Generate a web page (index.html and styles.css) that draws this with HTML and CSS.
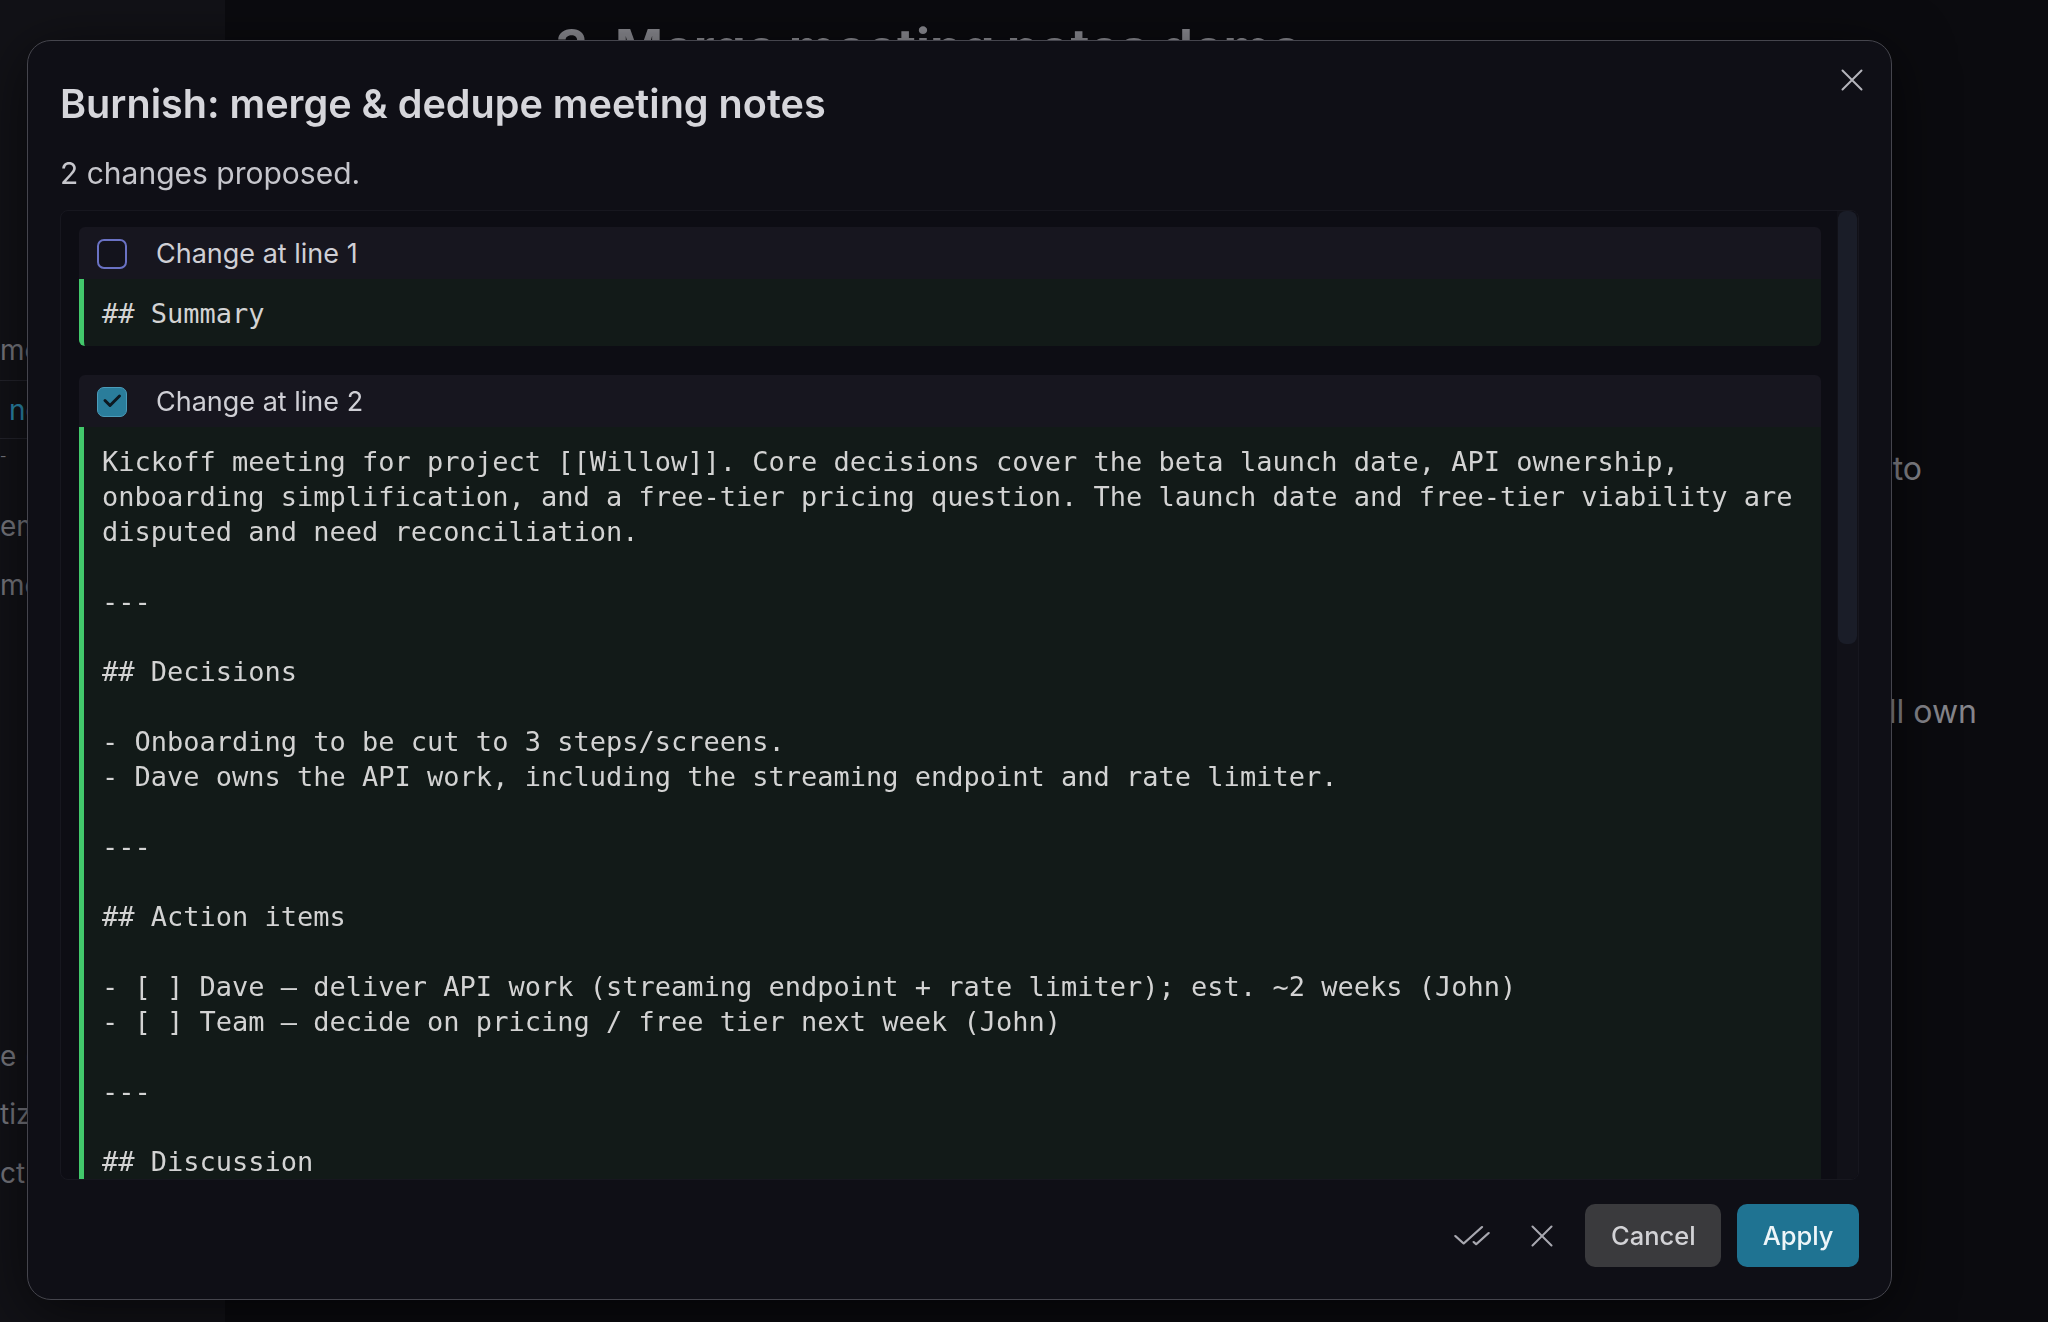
FILE: index.html
```html
<!DOCTYPE html>
<html lang="en">
<head>
<meta charset="utf-8">
<title>Burnish: merge &amp; dedupe meeting notes</title>
<link rel="stylesheet" href="styles.css">
</head>
<body>
<div class="page">
  <aside class="sidebar">
    <div class="side-item">meeting notes</div>
    <div class="side-item active">notes demo</div>
    <div class="side-item dim">-</div>
    <div class="side-item">emails</div>
    <div class="side-item">meetings</div>
    <div class="side-item nested">Kickoff</div>
    <div class="side-item nested">Standup</div>
    <div class="side-item nested">Retro</div>
    <div class="side-item nested">Planning</div>
    <div class="side-item nested">Review</div>
    <div class="side-item nested">Sync</div>
    <div class="side-item nested">Notes</div>
    <div class="side-item">e (draft)</div>
    <div class="side-item">tize</div>
    <div class="side-item">ct</div>
  </aside>
  <main class="main">
    <h1 class="doc-title">3. Merge meeting notes demo</h1>
    <p class="doc-line l1">the team agreed to</p>
    <p class="doc-line l2">Dave will own</p>
  </main>
</div>

<div class="modal" role="dialog" aria-labelledby="modal-title">
  <button class="close-btn" aria-label="Close">
    <svg width="22" height="22" viewBox="0 0 22 22" fill="none" stroke="currentColor" stroke-width="2" stroke-linecap="round"><path d="M1.5 1.5 20.5 20.5M20.5 1.5 1.5 20.5"/></svg>
  </button>
  <h2 class="modal-title" id="modal-title">Burnish: merge &amp; dedupe meeting notes</h2>
  <p class="modal-sub">2 changes proposed.</p>

  <div class="changes">
    <div class="changes-list">
      <section class="change">
        <div class="change-head">
          <span class="cb"></span>
          <span class="change-label">Change at line 1</span>
        </div>
        <pre class="diff">## Summary</pre>
      </section>

      <section class="change">
        <div class="change-head">
          <span class="cb checked">
            <svg width="30" height="30" viewBox="0 0 30 30" fill="none" stroke="currentColor" stroke-width="3" stroke-linecap="round" stroke-linejoin="round"><path d="M8 14.5 13 19.5 22.5 10"/></svg>
          </span>
          <span class="change-label">Change at line 2</span>
        </div>
        <pre class="diff">Kickoff meeting for project [[Willow]]. Core decisions cover the beta launch date, API ownership,
onboarding simplification, and a free-tier pricing question. The launch date and free-tier viability are
disputed and need reconciliation.

---

## Decisions

- Onboarding to be cut to 3 steps/screens.
- Dave owns the API work, including the streaming endpoint and rate limiter.

---

## Action items

- [ ] Dave — deliver API work (streaming endpoint + rate limiter); est. ~2 weeks (John)
- [ ] Team — decide on pricing / free tier next week (John)

---

## Discussion

- Beta launch date is disputed between the two sets of notes.
- Free-tier viability still needs numbers before a decision.</pre>
      </section>
    </div>
    <div class="scrollbar"><div class="thumb"></div></div>
  </div>

  <footer class="modal-foot">
    <button class="icon-btn" aria-label="Accept all">
      <svg width="40" height="36" viewBox="0 0 24 24" preserveAspectRatio="none" fill="none" stroke="currentColor" stroke-width="1.35" stroke-linecap="round" stroke-linejoin="round"><path d="M18 6 7 17l-5-5"/><path d="m22 10-7.5 7.5L13 16"/></svg>
    </button>
    <button class="icon-btn" aria-label="Reject all">
      <svg width="22" height="22" viewBox="0 0 22 22" fill="none" stroke="currentColor" stroke-width="2" stroke-linecap="round"><path d="M1.5 1.5 20.5 20.5M20.5 1.5 1.5 20.5"/></svg>
    </button>
    <button class="btn btn-cancel">Cancel</button>
    <button class="btn btn-apply">Apply</button>
  </footer>
</div>
</body>
</html>
```

FILE: styles.css
```css
html, body {
  margin: 0;
  padding: 0;
}

body {
  width: 2048px;
  height: 1322px;
  overflow: hidden;
  background: #0b0b0f;
  font-family: Inter, "Noto Sans", "Liberation Sans", sans-serif;
  color: #d4d4d8;
}

/* ---------- background page (dimmed) ---------- */
.page {
  display: flex;
  height: 1322px;
}

.sidebar {
  width: 225px;
  flex: none;
  box-sizing: border-box;
  padding-top: 321px;
  background: #121217;
  overflow: hidden;
}

.side-item {
  height: 58.8px;
  line-height: 58.8px;
  font-size: 28px;
  color: #77777e;
  white-space: nowrap;
}

.side-item.active {
  box-sizing: border-box;
  padding-left: 9px;
  color: #2b89ad;
  border-top: 1px solid #23232b;
  border-bottom: 1px solid #23232b;
}

.side-item.dim {
  font-size: 14px;
  line-height: 34px;
}

.side-item.nested {
  padding-left: 60px;
}

.main {
  flex: 1;
  padding: 0 71px 0 330px;
}

.doc-title {
  margin: 0;
  padding-top: 16px;
  font-size: 51.5px;
  line-height: 62px;
  font-weight: 700;
  color: #8a8a90;
  white-space: nowrap;
}

.doc-line {
  margin: 0;
  font-size: 32px;
  line-height: 48px;
  color: #85858b;
  text-align: right;
  white-space: nowrap;
}

.doc-line.l1 {
  margin-top: 367px;
  padding-right: 55px;
}

.doc-line.l2 {
  margin-top: 195px;
}

/* ---------- modal ---------- */
.modal {
  position: fixed;
  left: 27px;
  top: 40px;
  width: 1865px;
  height: 1260px;
  box-sizing: border-box;
  display: flex;
  flex-direction: column;
  padding: 39px 32px 32px;
  background: #0f0f16;
  border: 1.5px solid #45454d;
  border-radius: 24px;
  box-shadow: 0 12px 60px rgba(0, 0, 0, 0.6);
}

.close-btn {
  position: absolute;
  top: 28px;
  right: 28px;
  width: 22px;
  height: 22px;
  padding: 0;
  border: 0;
  background: none;
  color: #b4b4bb;
  display: flex;
}

.modal-title {
  margin: 0;
  font-size: 39.6px;
  line-height: 48px;
  font-weight: 600;
  color: #d6d6db;
}

.modal-sub {
  margin: 21px 0 12.5px;
  font-size: 30px;
  line-height: 48px;
  color: #c6c6cc;
}

.changes {
  flex: 1;
  min-height: 0;
  display: flex;
  background: #0d0d14;
  border: 1px solid #17171f;
  border-radius: 8px;
  overflow: hidden;
}

.changes-list {
  flex: 1;
  min-width: 0;
  display: flex;
  flex-direction: column;
  gap: 29px;
  padding: 16px 16.5px 0 18px;
  overflow: hidden;
}

.change {
  display: flex;
  flex-direction: column;
  flex: none;
}

.change-head {
  display: flex;
  align-items: center;
  gap: 29px;
  height: 52px;
  padding-left: 18px;
  background: #17161f;
  border-radius: 6px 6px 0 0;
}

.cb {
  width: 30px;
  height: 30px;
  box-sizing: border-box;
  border: 2px solid #6a72c4;
  border-radius: 7px;
  background: #13131c;
  flex: none;
  display: flex;
  margin-top: 2px;
}

.cb.checked {
  border: 1.5px solid #4b9cba;
  background: #2a7d9b;
  color: #0d1820;
}

.cb.checked svg {
  margin: -1.5px;
}

.change-label {
  font-size: 27px;
  line-height: 34px;
  padding-top: 3px;
  color: #cfcfd5;
}

.diff {
  margin: 0;
  padding: 17px 18px 15px;
  background: #121a18;
  border-left: 5px solid #42c86b;
  border-radius: 0 0 6px 6px;
  font-family: "DejaVu Sans Mono", "Liberation Mono", monospace;
  font-size: 27px;
  line-height: 35px;
  color: #d3d3d3;
  white-space: pre;
  overflow: hidden;
}

.scrollbar {
  width: 21px;
  flex: none;
  background: #111118;
}

.thumb {
  height: 433px;
  margin: 0 1px;
  background: #1a1d28;
  border-radius: 8px;
}

.modal-foot {
  display: flex;
  justify-content: flex-end;
  align-items: center;
  gap: 16px;
  margin-top: 24px;
  height: 63px;
  flex: none;
}

.icon-btn {
  width: 54px;
  height: 54px;
  padding: 0;
  border: 0;
  background: none;
  color: #a8a8b0;
  display: flex;
  align-items: center;
  justify-content: center;
}

.btn {
  height: 63px;
  padding: 0 25.5px;
  border: 0;
  border-radius: 10px;
  font-family: Inter, "Noto Sans", "Liberation Sans", sans-serif;
  font-size: 25.5px;
  font-weight: 500;
}

.btn-cancel {
  background: #3a3a3d;
  color: #d2d2d6;
}

.btn-apply {
  background: #1f7392;
  color: #eef6f9;
}
```
